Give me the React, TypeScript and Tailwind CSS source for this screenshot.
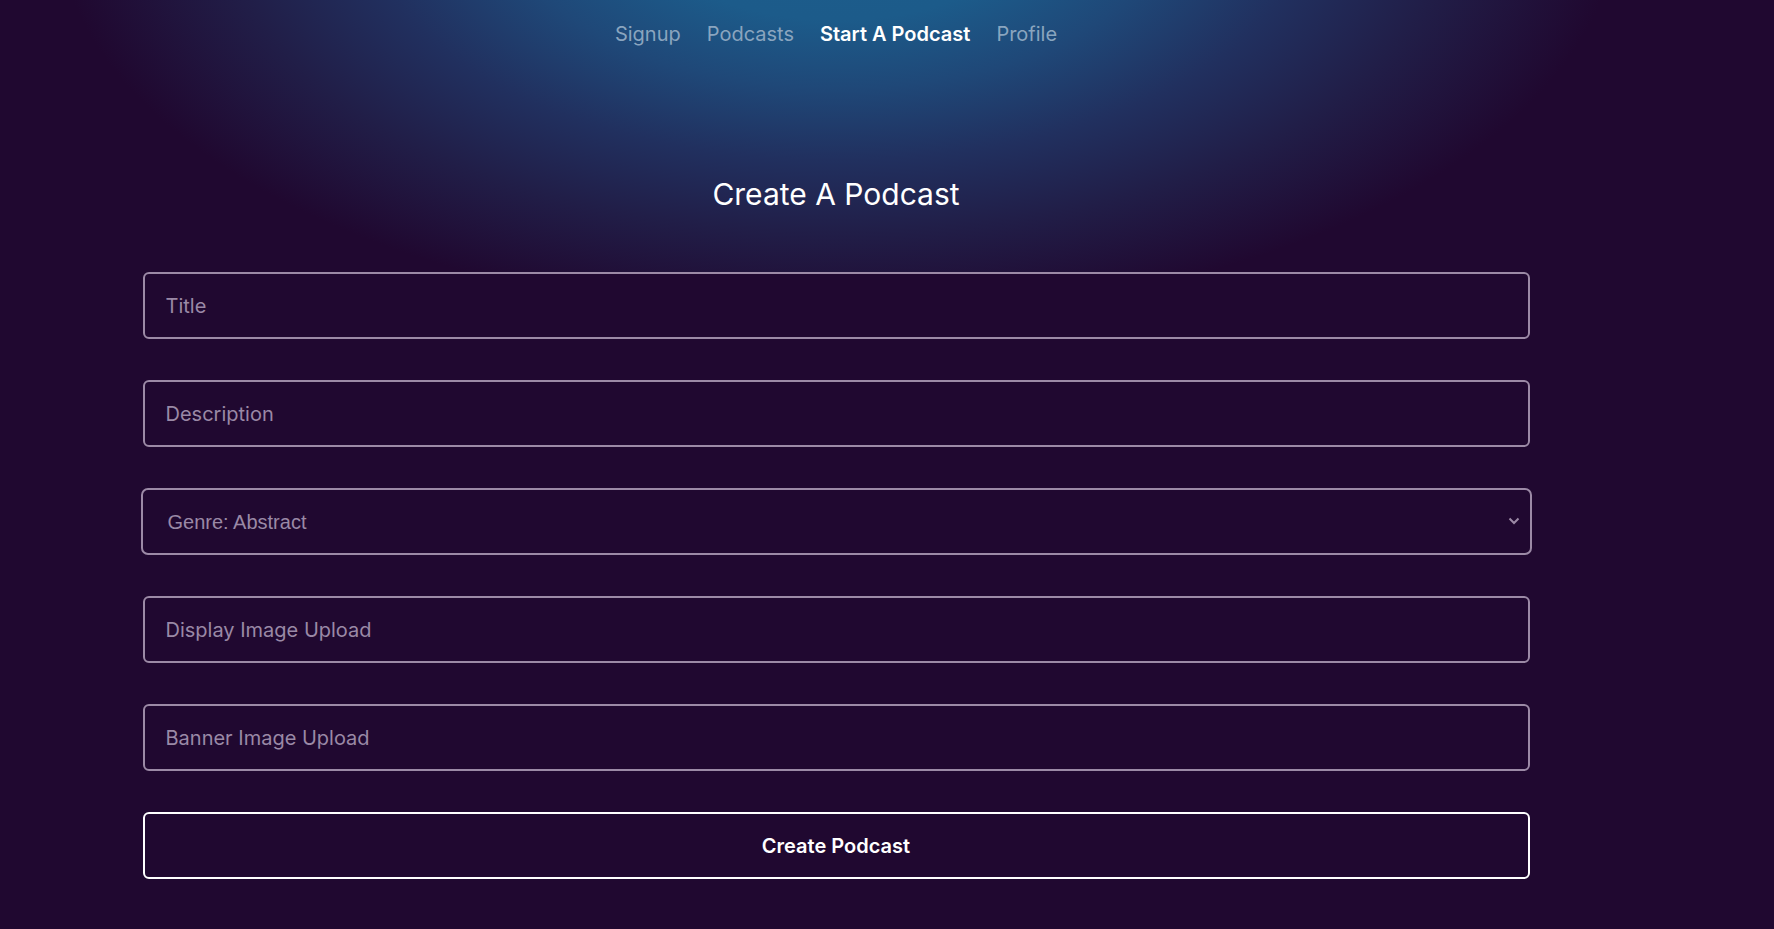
import React from "react";

const inputCls =
  "w-full h-[67px] rounded-[6px] border-2 border-[#9c8aa6] bg-[#200830] px-[21px] text-[20px] font-normal text-white placeholder:text-[#9a89a6] outline-none";

export default function App() {
  return (
    <div
      className="min-h-screen w-full bg-[#200830] bg-[radial-gradient(ellipse_780px_400px_at_837px_-80px,#1c5d8c_0%,#1c5b8a_25%,#1f4878_42%,#21305f_60%,#211e48_78%,#200830_100%)] bg-no-repeat"
      style={{ fontFamily: "Inter, 'Noto Sans', sans-serif" }}
    >
      <div className="w-[1672px] flex flex-col items-center">
        <nav className="flex items-center gap-[26px] pt-[20px] text-[20px] leading-[28px]">
          <a className="font-normal text-[#8aa5bf]">Signup</a>
          <a className="font-normal text-[#8aa5bf]">Podcasts</a>
          <a className="font-semibold text-white">Start A Podcast</a>
          <a className="font-normal text-[#8aa5bf]">Profile</a>
        </nav>
        <h1 className="mt-[128px] text-[30px] leading-[36px] font-normal text-white">
          Create A Podcast
        </h1>
        <form className="mt-[60px] w-[1387px] flex flex-col gap-[41px]">
          <input className={inputCls} placeholder="Title" />
          <input className={inputCls} placeholder="Description" />
          <div className="relative -mx-[2px]">
            <select
              className="w-full h-[67px] appearance-none rounded-[7px] border-2 border-[#9c8aa6] bg-[#200830] pl-[25px] text-[20px] text-[#9a89a6] outline-none"
              style={{ fontFamily: "'Liberation Sans', Arial, sans-serif" }}
              defaultValue="abstract"
            >
              <option value="abstract">Genre: Abstract</option>
            </select>
            <svg
              className="absolute right-[12px] top-[29px]"
              width="12"
              height="8"
              viewBox="0 0 12 8"
              fill="none"
            >
              <path d="M1.5 1.5 L6 6 L10.5 1.5" stroke="#9c8aa6" strokeWidth="2" />
            </svg>
          </div>
          <input className={inputCls} placeholder="Display Image Upload" />
          <input className={inputCls} placeholder="Banner Image Upload" />
          <button
            type="button"
            className="w-full h-[67px] rounded-[6px] border-2 border-white bg-[#200830] text-[20px] font-semibold text-white"
          >
            Create Podcast
          </button>
        </form>
      </div>
    </div>
  );
}
